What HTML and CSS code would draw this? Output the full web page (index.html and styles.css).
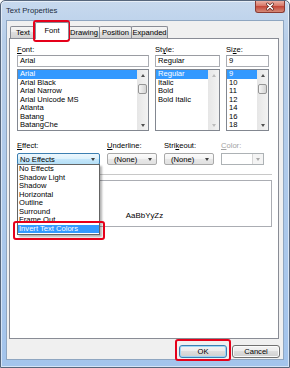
FILE: index.html
```html
<!DOCTYPE html>
<html lang="en">
<head>
    <meta charset="UTF-8">
    <title>Text Properties</title>
    <link rel="stylesheet" href="styles.css">
</head>
<body>
<div class="window">
    <div class="titlebar">
        <span class="title">Text Properties</span>
        <div class="close">
            <svg width="28" height="11" viewBox="0 0 28 11">
                <path d="M11.5 3 L16.5 8 M16.5 3 L11.5 8" stroke="#5b2620" stroke-width="3" stroke-linecap="round"/>
                <path d="M11.5 3 L16.5 8 M16.5 3 L11.5 8" stroke="#fff" stroke-width="1.6" stroke-linecap="round"/>
            </svg>
        </div>
    </div>

    <div class="client">
        <div class="tabs">
            <div class="tab tab-text">Text</div>
            <div class="tab tab-font active">Font</div>
            <div class="tab tab-drawing">Drawing</div>
            <div class="tab tab-position">Position</div>
            <div class="tab tab-expanded">Expanded</div>
        </div>

        <div class="panel">
            <div class="font-grid">
                <div class="field">
                    <div class="label"><u>F</u>ont:</div>
                    <div class="input">Arial</div>
                    <div class="list">
                        <div class="items">
                            <div class="item sel">Arial</div>
                            <div class="item">Arial Black</div>
                            <div class="item">Arial Narrow</div>
                            <div class="item">Arial Unicode MS</div>
                            <div class="item">Atlanta</div>
                            <div class="item">Batang</div>
                            <div class="item">BatangChe</div>
                        </div>
                        <div class="scroll">
                            <span class="arrow up"></span>
                            <span class="thumb"></span>
                            <span class="spacer"></span>
                            <span class="arrow down"></span>
                        </div>
                    </div>
                </div>
                <div class="field">
                    <div class="label">St<u>y</u>le:</div>
                    <div class="input">Regular</div>
                    <div class="list">
                        <div class="items">
                            <div class="item sel">Regular</div>
                            <div class="item">Italic</div>
                            <div class="item">Bold</div>
                            <div class="item">Bold Italic</div>
                        </div>
                        <div class="scroll off">
                            <span class="arrow up"></span>
                            <span class="spacer"></span>
                            <span class="arrow down"></span>
                        </div>
                    </div>
                </div>
                <div class="field">
                    <div class="label">Si<u>z</u>e:</div>
                    <div class="input">9</div>
                    <div class="list">
                        <div class="items">
                            <div class="item sel">9</div>
                            <div class="item">10</div>
                            <div class="item">11</div>
                            <div class="item">12</div>
                            <div class="item">14</div>
                            <div class="item">16</div>
                            <div class="item">18</div>
                        </div>
                        <div class="scroll">
                            <span class="arrow up"></span>
                            <span class="thumb"></span>
                            <span class="spacer"></span>
                            <span class="arrow down"></span>
                        </div>
                    </div>
                </div>
            </div>

            <div class="effects">
                <div class="field effect">
                    <div class="label"><u>E</u>ffect:</div>
                    <div class="select open"><span>No Effects</span><span class="caret"></span></div>
                </div>
                <div class="field underline">
                    <div class="label"><u>U</u>nderline:</div>
                    <div class="select"><span>(None)</span><span class="caret"></span></div>
                </div>
                <div class="field strike">
                    <div class="label">Stri<u>k</u>eout:</div>
                    <div class="select"><span>(None)</span><span class="caret"></span></div>
                </div>
                <div class="field color">
                    <div class="label dim"><u>C</u>olor:</div>
                    <div class="select disabled"><span></span><span class="drop-btn"><span class="caret"></span></span></div>
                </div>
            </div>

            <div class="sep"></div>
            <div class="preview">AaBbYyZz</div>

            <div class="dropdown">
                <div class="item">No Effects</div>
                <div class="item">Shadow Light</div>
                <div class="item">Shadow</div>
                <div class="item">Horizontal</div>
                <div class="item">Outline</div>
                <div class="item">Surround</div>
                <div class="item">Frame Out</div>
                <div class="item sel">Invert Text Colors</div>
            </div>
        </div>

        <div class="buttons">
            <div class="btn default">OK</div>
            <div class="btn">Cancel</div>
        </div>
    </div>

    <!-- red callouts -->
    <div class="mark mark-tab"></div>
    <div class="mark mark-effect"></div>
    <div class="mark mark-ok"></div>
</div>
</body>
</html>
```

FILE: styles.css
```css
* { box-sizing: border-box; }
body { margin: 0; font-family: "Liberation Sans", Arial, sans-serif; font-size: 7.6px; color: #000; background: #fff; }

.window { position: relative; width: 290px; height: 368px; border: 1px solid #56667c; border-radius: 5px 5px 0 0; background: linear-gradient(#c7d9ee, #b7cee9 40px, #a3c4ec); box-shadow: inset 0 0 0 1px rgba(255,255,255,.55); padding: 0 5px 7px; display: flex; flex-direction: column; }
.titlebar { height: 19px; display: flex; justify-content: space-between; align-items: flex-start; }
.title { margin-top: 5px; font-size: 7.7px; line-height: 9px; color: #1c2c40; }
.close { width: 30px; height: 12px; margin-right: -1px; border: 1px solid #8a3a32; border-top: none; border-radius: 0 0 3px 3px; background: linear-gradient(#eab0a4, #d77666 45%, #c4483a 50%, #d58a78); display: flex; justify-content: center; align-items: center; }

.client { flex: 1; display: flex; flex-direction: column; background: #f0f0f0; border: 1px solid #8fa6c1; padding: 0 4px 0 2px; }

.tabs { height: 17px; display: flex; align-items: flex-end; padding-left: 1px; }
.tab { height: 12px; margin-right: -1px; border: 1px solid #898c95; border-bottom: none; border-radius: 2px 2px 0 0; background: linear-gradient(#f4f4f4, #ececec 50%, #dedede 50%, #d2d2d2); text-align: center; line-height: 11px; white-space: nowrap; }
.tab-text { width: 26px; }
.tab-font { width: 34px; }
.tab-drawing { width: 32px; }
.tab-position { width: 33px; }
.tab-expanded { width: 37px; }
.tab.active { position: relative; z-index: 1; height: 17px; margin-bottom: -1px; background: #fff; line-height: 9px; padding-top: 3px; }

.panel { flex: 1; position: relative; background: #fff; border: 1px solid #898c95; padding: 6px 6px 0 7px; }

.font-grid { display: grid; grid-template-columns: 132px 65px 43px; column-gap: 6px; }
.label { height: 9px; line-height: 9px; margin-bottom: 1px; white-space: nowrap; }
.label.dim { color: #a3a3a3; }
.input { height: 12px; border: 1px solid #abadb3; border-top-color: #9a9ca2; padding-left: 2px; line-height: 10px; background: #fff; }
.list { height: 62px; margin-top: 2px; border: 1px solid #828790; display: flex; background: #fff; }
.items { flex: 1; overflow: hidden; }
.item { height: 8.55px; line-height: 8.55px; padding-left: 2px; white-space: nowrap; }
.item.sel { background: #3399ff; color: #fff; }

.scroll { width: 11px; display: flex; flex-direction: column; background: linear-gradient(to right, #e6e6e6, #f3f3f3); }
.spacer { flex: 1; }
.arrow { height: 10px; display: flex; justify-content: center; align-items: center; }
.arrow::before { content: ""; border-left: 2.5px solid transparent; border-right: 2.5px solid transparent; }
.arrow.up::before { border-bottom: 3px solid #505050; }
.arrow.down::before { border-top: 3px solid #505050; }
.scroll.off .arrow.up::before { border-bottom-color: #bcbcbc; }
.scroll.off .arrow.down::before { border-top-color: #bcbcbc; }
.thumb { height: 10px; margin: 4px 1px 0; border: 1px solid #959595; border-radius: 2px; background: linear-gradient(to right, #f6f6f6, #e4e4e4 50%, #d4d4d4); }

.effects { display: flex; gap: 7px; margin-top: 10px; }
.effects .label { margin-bottom: 3px; }
.effect { width: 83px; }
.underline, .strike { width: 50px; }
.color { width: 43px; }
.select { height: 12px; display: flex; justify-content: space-between; align-items: center; padding: 0 4px 0 6px; border: 1px solid #a9a9a9; border-radius: 2px; background: linear-gradient(#fbfbfb, #f3f3f3 50%, #e8e8e8 50%, #e1e1e1); white-space: nowrap; }
.select.open { padding-left: 2px; border-color: #3c7fb1; background: linear-gradient(#edf7fd, #dcf1fc 50%, #c6e7fb 50%, #b4dff6); }
.caret { border-left: 2.5px solid transparent; border-right: 2.5px solid transparent; border-top: 3px solid #404040; }
.select.disabled { padding: 0; border-color: #adb2b5; border-radius: 0; background: #fff; }
.drop-btn { width: 11px; height: 100%; display: flex; justify-content: center; align-items: center; border-left: 1px solid #d6d6d6; background: #f4f4f4; }
.drop-btn .caret { border-top-color: #a8a8a8; }

.sep { height: 1px; margin-top: 9px; background: #c8c8c8; }
.preview { height: 47px; margin-top: 5px; border: 1px solid #abadb3; display: flex; justify-content: center; align-items: flex-end; padding-bottom: 6px; font-size: 7.9px; line-height: 9px; }

.dropdown { position: absolute; left: 7px; top: 125px; width: 83px; padding-bottom: 1px; border: 1px solid #646464; background: #fff; box-shadow: 2px 2px 2px rgba(0,0,0,.3); }
.dropdown .item { padding-left: 1px; }

.buttons { height: 20px; display: flex; justify-content: flex-end; gap: 5px; padding-top: 6px; margin-right: -1px; }
.btn { width: 48px; height: 13px; border: 1px solid #707070; border-radius: 3px; background: linear-gradient(#f3f3f3, #ebebeb 50%, #dddddd 50%, #cfcfcf); box-shadow: inset 0 0 0 1px #fbfbfb; text-align: center; line-height: 11px; }
.btn.default { border-color: #3c7fb1; box-shadow: inset 0 0 0 1px #9fd5f5; }

.mark { position: absolute; border: 2px solid #e5001a; border-radius: 3px; }
.mark-tab { left: 32px; top: 19px; width: 37px; height: 22px; }
.mark-effect { left: 12px; top: 220px; width: 92px; height: 19px; }
.mark-ok { left: 174px; top: 338px; width: 56px; height: 22px; }
```
